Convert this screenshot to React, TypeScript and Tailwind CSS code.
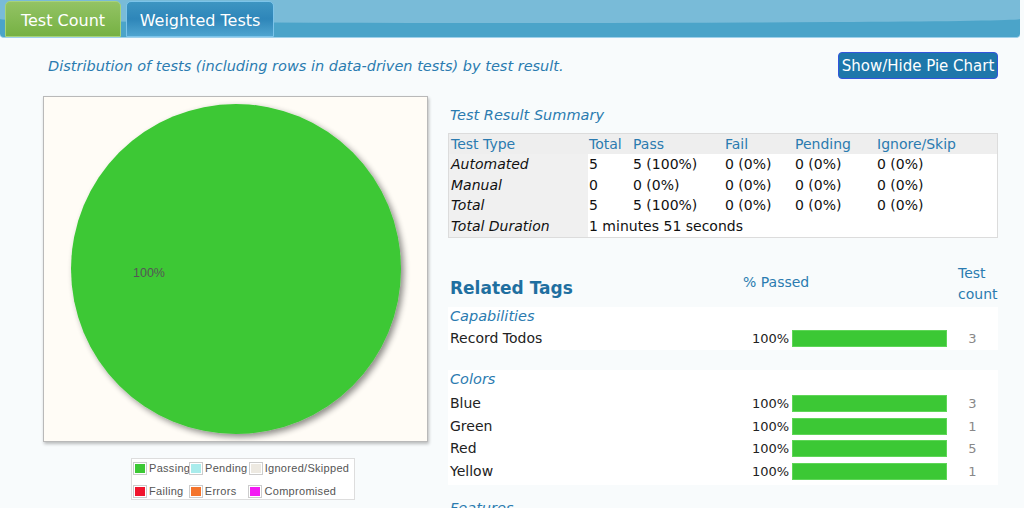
import React from "react";

const font = { fontFamily: '"DejaVu Sans", Verdana, sans-serif' };

function Pie() {
  return (
    <svg width="383" height="344" viewBox="0 0 383 344">
      <defs>
        <filter id="sh" x="-20%" y="-20%" width="140%" height="140%">
          <feGaussianBlur in="SourceAlpha" stdDeviation="3" />
          <feOffset dx="3" dy="3" result="b" />
          <feComponentTransfer>
            <feFuncA type="linear" slope="0.45" />
          </feComponentTransfer>
          <feMerge>
            <feMergeNode />
            <feMergeNode in="SourceGraphic" />
          </feMerge>
        </filter>
      </defs>
      <circle cx="192" cy="172" r="165" fill="#3cc835" filter="url(#sh)" />
      <text x="89" y="180" fontSize="12.5" fill="#555" fontFamily="Liberation Sans, Arial, sans-serif">100%</text>
    </svg>
  );
}

function LegendItem({ color, label, w }: { color: string; label: string; w: string }) {
  return (
    <div className={`flex items-center h-[15px] ${w}`}>
      <span className="w-[14px] h-[13px] border border-[#ccc] bg-white p-[1px] mr-[2px] flex shrink-0">
        <span className="flex-1" style={{ background: color }} />
      </span>
      <span
        className="text-[11px] text-[#555] tracking-[0.3px] whitespace-nowrap"
        style={{ fontFamily: '"Liberation Sans", Arial, sans-serif' }}
      >
        {label}
      </span>
    </div>
  );
}

const rows = [
  ["Automated", "5", "5 (100%)", "0 (0%)", "0 (0%)", "0 (0%)"],
  ["Manual", "0", "0 (0%)", "0 (0%)", "0 (0%)", "0 (0%)"],
  ["Total", "5", "5 (100%)", "0 (0%)", "0 (0%)", "0 (0%)"],
];

function TagRow({ name, count }: { name: string; count: string }) {
  return (
    <div className="flex items-center h-[22.5px]">
      <div className="w-[304px] pl-[2px] text-[14px] text-[#222]">{name}</div>
      <div className="w-[40px] text-right text-[13px] text-[#222] pr-[3px]">100%</div>
      <div className="w-[155px] h-[17px] bg-[#3cc835] border border-[#5fd658]" />
      <div className="w-[51px] text-center text-[13px] text-[#888]">{count}</div>
    </div>
  );
}

export default function App() {
  return (
    <div className="w-[1024px] h-[508px] overflow-hidden bg-[#f8fbfc]" style={font}>
      {/* header */}
      <div className="w-[1020px] h-[38px] relative rounded-b-[4px] overflow-hidden bg-[#4ba4c9] border-b border-[#9fd0ea]">
        <div className="absolute inset-x-0 top-0 h-[17px] bg-[#79bbd8]" />
        <div className="absolute left-0 right-0 top-[15px] h-[8px] bg-[#79bbd8] rounded-b-[50%]" />
        <div className="relative flex items-end h-full pl-[5px] gap-[5px]">
          <div className="w-[116px] h-[36px] pt-[3px] rounded-t-[5px] border border-[#a6d27a] bg-gradient-to-b from-[#93c364] to-[#76b143] flex items-center justify-center text-white text-[16px]">
            Test Count
          </div>
          <div className="w-[148px] h-[36px] pt-[3px] rounded-t-[5px] border border-[#7cc4ea] bg-gradient-to-b from-[#3d95c2] via-[#2e86b9] to-[#4ea4cf] flex items-center justify-center text-white text-[16px]">
            Weighted Tests
          </div>
        </div>
      </div>

      <div className="pl-[43px] pr-[26px]">
        <div className="flex items-center justify-between mt-[14px] h-[27px]">
          <div className="ml-[5px] pt-[3px] italic text-[14.5px] text-[#2b7bb0]">
            Distribution of tests (including rows in data-driven tests) by test result.
          </div>
          <button className="h-[27px] w-[160px] pt-[1px] rounded-[4px] bg-[#1e77aa] border border-[#3355dd] text-white text-[15px]">
            Show/Hide Pie Chart
          </button>
        </div>

        <div className="flex mt-[17px] gap-[20px]">
          {/* left */}
          <div className="w-[385px] flex flex-col">
            <div className="h-[346px] border border-[#b9b9b9] bg-[#fffcf6] shadow-[1px_2px_3px_rgba(0,0,0,0.25)]">
              <Pie />
            </div>
            <div className="ml-[88px] mt-[16px] w-[224px] h-[42px] border border-[#ddd] bg-white pl-[1px] pt-[2px] flex flex-col gap-[8px]">
              <div className="flex">
                <LegendItem color="#3cc835" label="Passing" w="w-[56px]" />
                <LegendItem color="#a9ecec" label="Pending" w="w-[60px]" />
                <LegendItem color="#ede9e1" label="Ignored/Skipped" w="w-[106px]" />
              </div>
              <div className="flex">
                <LegendItem color="#f0142c" label="Failing" w="w-[56px]" />
                <LegendItem color="#f4742c" label="Errors" w="w-[60px]" />
                <LegendItem color="#f31cf3" label="Compromised" w="w-[106px]" />
              </div>
            </div>
          </div>

          {/* right */}
          <div className="w-[550px] flex flex-col">
            <div className="h-[37px] flex items-center pl-[2px] pt-[2px] italic text-[14.5px] text-[#2b7bb0]">
              Test Result Summary
            </div>
            <div className="border border-[#dcdcdc] bg-white text-[14px]">
              <div className="flex h-[20px] items-center bg-[#eeeeee] text-[#2b7bb0]">
                <div className="w-[139px] pl-[2px]">Test Type</div>
                <div className="w-[43px] pl-[1px]">Total</div>
                <div className="w-[92px] pl-[2px]">Pass</div>
                <div className="w-[70px] pl-[2px]">Fail</div>
                <div className="w-[82px] pl-[2px]">Pending</div>
                <div className="flex-1 pl-[2px]">Ignore/Skip</div>
              </div>
              {rows.map((r) => (
                <div key={r[0]} className="flex h-[20.5px] items-center text-[#111]">
                  <div className="w-[139px] pl-[2px] italic bg-[#f0f0f0] h-full flex items-center pt-[1px]">{r[0]}</div>
                  <div className="w-[43px] pl-[1px] pt-[1px]">{r[1]}</div>
                  <div className="w-[92px] pl-[2px] pt-[1px]">{r[2]}</div>
                  <div className="w-[70px] pl-[2px] pt-[1px]">{r[3]}</div>
                  <div className="w-[82px] pl-[2px] pt-[1px]">{r[4]}</div>
                  <div className="flex-1 pl-[2px] pt-[1px]">{r[5]}</div>
                </div>
              ))}
              <div className="flex h-[21px] items-center text-[#111]">
                <div className="w-[139px] pl-[2px] italic bg-[#f0f0f0] h-full flex items-center">Total Duration</div>
                <div className="pl-[1px]">1 minutes 51 seconds</div>
              </div>
            </div>

            <div className="flex items-end h-[69px] pb-[5px] relative">
              <div className="w-[295px] pl-[2px] font-bold text-[17px] text-[#1f6fa0]">Related Tags</div>
              <div className="absolute left-[295px] top-[34px] text-[14px] text-[#2b7bb0]">% Passed</div>
              <div className="absolute left-[510px] top-[25px] text-[14px] leading-[21px] text-[#2b7bb0]">
                Test
                <br />
                count
              </div>
            </div>

            <div className="bg-white h-[43px] flex flex-col pt-[1px]">
              <div className="pl-[2px] italic text-[14.5px] leading-[16px] text-[#2b7bb0] h-[20px]">Capabilities</div>
              <TagRow name="Record Todos" count="3" />
            </div>

            <div className="bg-white mt-[20px] h-[115px] flex flex-col pt-[1px]">
              <div className="pl-[2px] italic text-[14.5px] leading-[16px] text-[#2b7bb0] h-[22px]">Colors</div>
              <TagRow name="Blue" count="3" />
              <TagRow name="Green" count="1" />
              <TagRow name="Red" count="5" />
              <TagRow name="Yellow" count="1" />
            </div>
            <div className="mt-[13px] pl-[2px] italic text-[14.5px] text-[#2b7bb0]">Features</div>
          </div>
        </div>
      </div>
    </div>
  );
}
